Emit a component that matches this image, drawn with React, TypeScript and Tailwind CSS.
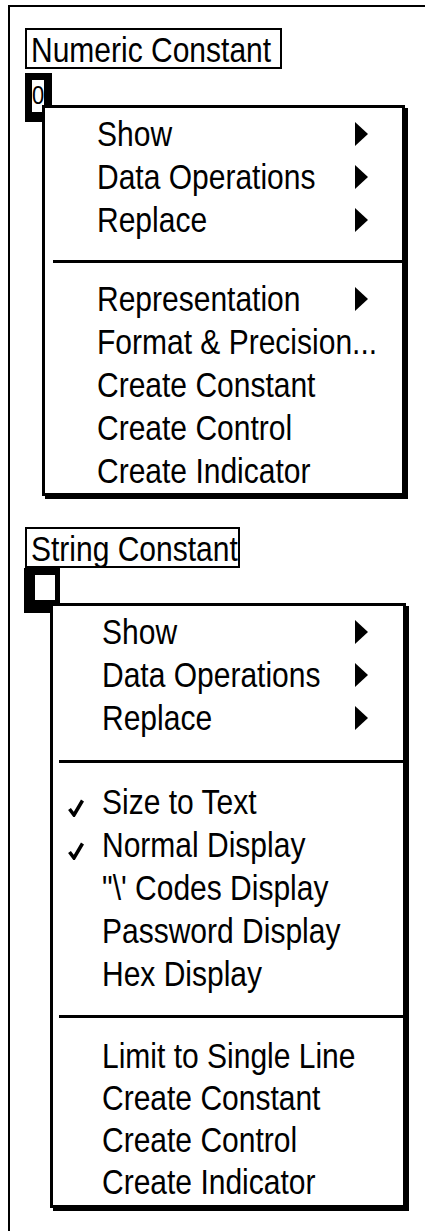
import type { ReactNode } from "react";

type Item = { label: string; arrow?: boolean; checked?: boolean };

const numericTop: Item[] = [
  { label: "Show", arrow: true },
  { label: "Data Operations", arrow: true },
  { label: "Replace", arrow: true },
];

const numericBottom: Item[] = [
  { label: "Representation", arrow: true },
  { label: "Format & Precision..." },
  { label: "Create Constant" },
  { label: "Create Control" },
  { label: "Create Indicator" },
];

const stringDisplay: Item[] = [
  { label: "Size to Text", checked: true },
  { label: "Normal Display", checked: true },
  { label: "\"\\' Codes Display" },
  { label: "Password Display" },
  { label: "Hex Display" },
];

const stringBottom: Item[] = [
  { label: "Limit to Single Line" },
  { label: "Create Constant" },
  { label: "Create Control" },
  { label: "Create Indicator" },
];

// the old bitmap font is tall and narrow, so stretch Arial-width text vertically
function Tall({ children }: { children: ReactNode }) {
  return <span className="inline-block origin-center scale-y-[1.18]">{children}</span>;
}

function Arrow() {
  return (
    <svg width="13" height="24" viewBox="0 0 13 24" className="shrink-0">
      <polygon points="0,0 13,12 0,24" fill="#000" />
    </svg>
  );
}

function Check() {
  return (
    <svg width="16" height="18" viewBox="0 0 16 18">
      <path d="M1.5 10 L6 16 L14.5 1.5" fill="none" stroke="#000" strokeWidth="3.5" />
    </svg>
  );
}

function Row({
  item,
  lead,
  textWidth,
  height,
}: {
  item: Item;
  lead: string;
  textWidth: string;
  height: string;
}) {
  return (
    <div className={`flex items-center ${height}`}>
      <div className={`flex h-full shrink-0 items-start pt-[19px] pl-[15px] ${lead}`}>
        {item.checked && <Check />}
      </div>
      <div className={`shrink-0 whitespace-nowrap ${textWidth}`}>
        <Tall>{item.label}</Tall>
      </div>
      {item.arrow && <Arrow />}
    </div>
  );
}

function Separator({ className }: { className: string }) {
  return <div className={`h-[3px] bg-black ${className}`} />;
}

function Menu({ className, children }: { className: string; children: ReactNode }) {
  return (
    <div
      className={`relative z-10 border-[3px] border-black bg-white shadow-[3px_3px_0_#000] ${className}`}
    >
      {children}
    </div>
  );
}

export default function App() {
  return (
    <div className="min-h-[1231px] bg-white text-black font-['Liberation_Sans',Arial,sans-serif] text-[30px]">
      <div className="mt-[5px] ml-[8px] min-h-[1226px] border-t-2 border-l-2 border-black pt-[21px] pl-[15px]">
        {/* numeric constant */}
        <div className="h-[41px] w-[257px] border-2 border-black pt-[2px] pl-[4px] leading-[35px] whitespace-nowrap">
          <Tall>Numeric Constant</Tall>
        </div>
        <div className="mt-[4px] flex h-[49px] w-[27px] justify-center overflow-hidden border-t-[7px] border-r-[8px] border-b-[10px] border-l-[7px] border-black bg-white text-[22px] leading-[32px]">
          <Tall>0</Tall>
        </div>
        <Menu className="-mt-[17px] ml-[17px] w-[363px] pt-[4px] pb-px">
          <div className="leading-[43px]">
            {numericTop.map((item) => (
              <Row key={item.label} item={item} lead="w-[52px]" textWidth="w-[258px]" height="h-[43px]" />
            ))}
          </div>
          <Separator className="mt-[19px] mb-[14px] ml-[8px]" />
          <div className="leading-[43px]">
            {numericBottom.map((item) => (
              <Row key={item.label} item={item} lead="w-[52px]" textWidth="w-[258px]" height="h-[43px]" />
            ))}
          </div>
        </Menu>

        {/* string constant */}
        <div className="mt-[31px] h-[41px] w-[215px] border-2 border-black pt-[2px] pl-[4px] leading-[35px] whitespace-nowrap">
          <Tall>String Constant</Tall>
        </div>
        <div className="-ml-px h-[45px] w-[36px] border-t-[7px] border-r-[5px] border-b-[13px] border-l-[11px] border-black bg-white" />
        <Menu className="-mt-[10px] ml-[25px] w-[356px] pt-[4px] pb-[2px]">
          <div className="leading-[43px]">
            {numericTop.map((item) => (
              <Row key={item.label} item={item} lead="w-[49px]" textWidth="w-[253px]" height="h-[43px]" />
            ))}
          </div>
          <Separator className="mt-[21px] mb-[17px] ml-[6px]" />
          <div className="leading-[43px]">
            {stringDisplay.map((item) => (
              <Row key={item.label} item={item} lead="w-[49px]" textWidth="w-[253px]" height="h-[43px]" />
            ))}
          </div>
          <Separator className="mt-[20px] mb-[17px] ml-[6px]" />
          <div className="leading-[42px]">
            {stringBottom.map((item) => (
              <Row key={item.label} item={item} lead="w-[49px]" textWidth="w-[253px]" height="h-[42px]" />
            ))}
          </div>
        </Menu>
      </div>
    </div>
  );
}
